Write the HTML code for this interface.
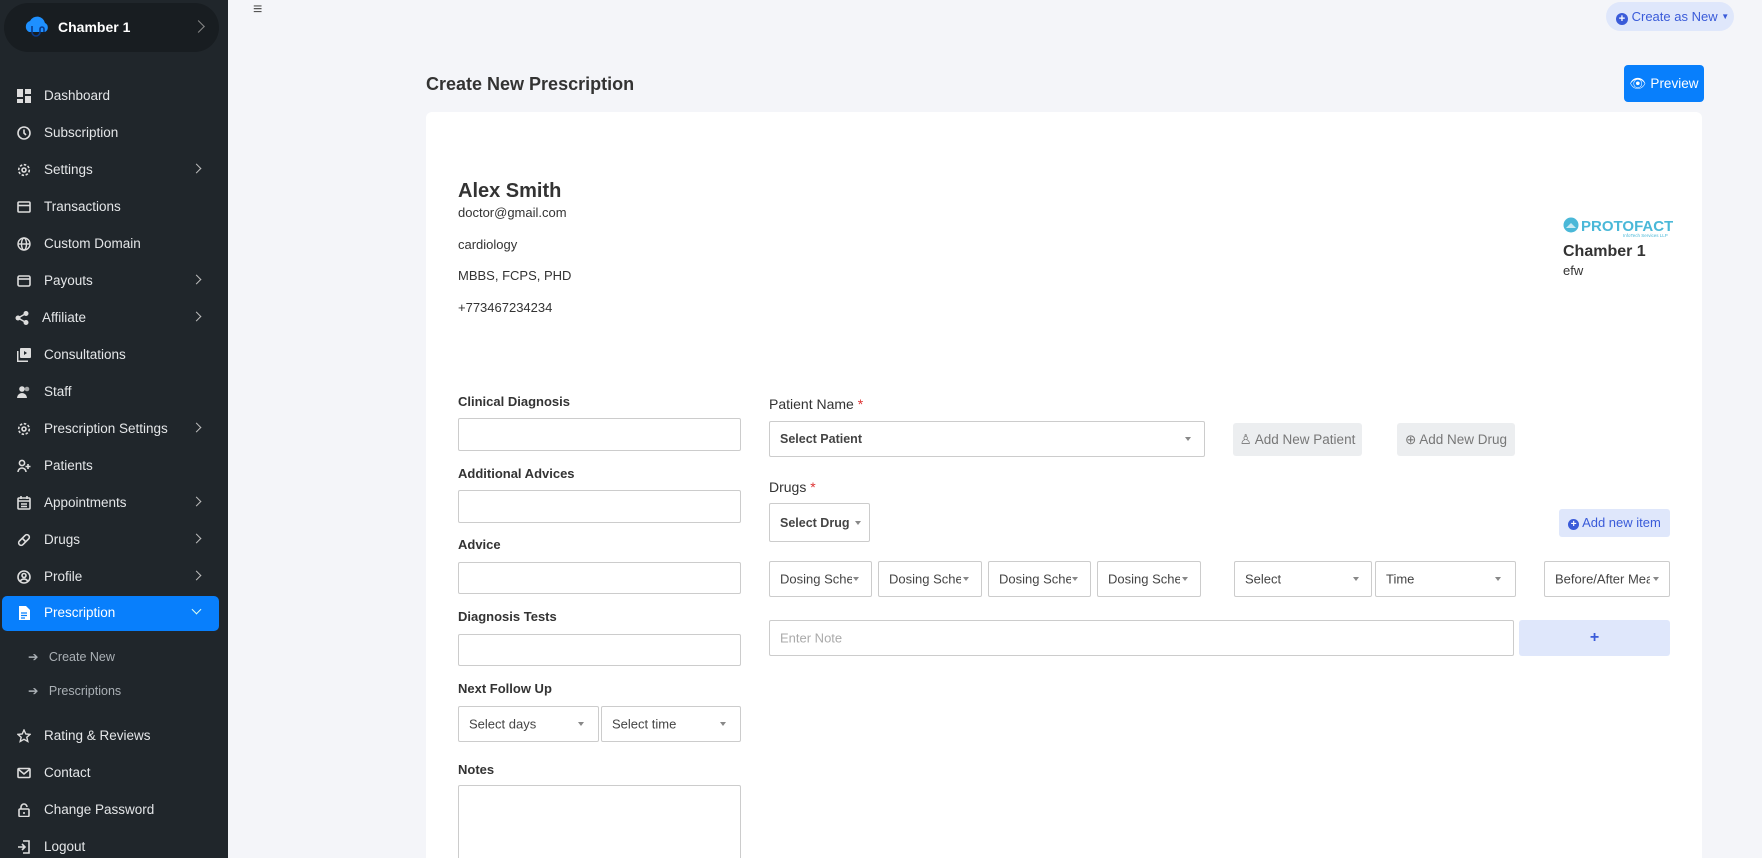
<!DOCTYPE html><html><head><meta charset="utf-8"><style>
*{box-sizing:border-box;margin:0;padding:0}
html{width:1762px;height:858px;overflow:hidden}
body{width:1762px;height:858px;overflow:hidden;background:#f4f5f9;font-family:"Liberation Sans",sans-serif;position:relative;color:#333}
.sb{position:absolute;left:0;top:0;width:228px;height:858px;background:#20262b}
.hd{position:absolute;left:4px;top:3px;width:215px;height:49px;border-radius:25px;background:#181d21;color:#fff;font-weight:bold;font-size:14px}
.mi{position:absolute;left:0;width:228px;height:34px;color:#e4e6e8;font-size:13.5px;line-height:34px}
.mi .ic{position:absolute;left:17px;top:10px;width:14px;height:14px}
.mi .t{position:absolute;left:44px}
.mi .ch{position:absolute;left:193px;top:12px;width:7px;height:7px;border-right:1.5px solid #bbb;border-top:1.5px solid #bbb;transform:rotate(45deg)}
.sub{position:absolute;color:#aab0b5;font-size:12.5px}
.a{position:absolute}
.card{position:absolute;left:426px;top:112px;width:1276px;height:746px;background:#fff;border-radius:6px 6px 0 0;overflow:hidden}
.lb{position:absolute;font-size:13px;font-weight:bold;color:#333}
.in{position:absolute;border:1px solid #ccc;border-radius:2px;background:#fff;font-size:13px;color:#444}
.in .v{position:absolute;left:10px;top:50%;transform:translateY(-50%);white-space:nowrap;overflow:hidden}
.car{position:absolute;top:50%;margin-top:-2px;width:0;height:0;border-left:3.5px solid transparent;border-right:3.5px solid transparent;border-top:4px solid #888}
.btn{position:absolute;border-radius:3px;font-size:13.5px;text-align:center}
</style></head><body>
<div class="sb">
 <div class="hd">
  <svg class="a" style="left:18px;top:11px" width="30" height="28" viewBox="0 0 30 28"><path d="M7 18a6 6 0 0 1 1-11 8 8 0 0 1 15 2 5 5 0 0 1 0 9z" fill="#1e90ff"/><path d="M10 12v6a4 4 0 0 0 8 0v-3a2 2 0 0 1 4 0v3" stroke="#0a3a8a" stroke-width="1.6" fill="none"/></svg>
  <span class="a" style="left:54px;top:16px">Chamber 1</span>
  <span class="a" style="left:190px;top:19px;width:9px;height:9px;border-right:1.3px solid #888;border-top:1.3px solid #888;transform:rotate(45deg)"></span>
 </div>
 <div class="mi" style="top:79px"><svg class="ic" viewBox="0 0 14 14" fill="#ddd"><rect x="0" y="0" width="6" height="8"/><rect x="8" y="0" width="6" height="5"/><rect x="0" y="10" width="6" height="4"/><rect x="8" y="7" width="6" height="7"/></svg><span class="t">Dashboard</span></div>
 <div class="mi" style="top:116px"><svg class="ic" viewBox="0 0 14 14" fill="none" stroke="#ddd" stroke-width="1.6"><circle cx="7" cy="7" r="6"/><path d="M7 3.5V7l2 2"/></svg><span class="t">Subscription</span></div>
 <div class="mi" style="top:153px"><svg class="ic" viewBox="0 0 14 14" fill="none" stroke="#ddd" stroke-width="1.6"><circle cx="7" cy="7" r="2"/><circle cx="7" cy="7" r="5.3" stroke-dasharray="2.5 1.6"/></svg><span class="t">Settings</span><span class="ch"></span></div>
 <div class="mi" style="top:190px"><svg class="ic" viewBox="0 0 14 14" fill="none" stroke="#ddd" stroke-width="1.6"><rect x="1" y="2" width="12" height="10" rx="1"/><path d="M1 5.5h12"/></svg><span class="t">Transactions</span></div>
 <div class="mi" style="top:227px"><svg class="ic" viewBox="0 0 14 14" fill="none" stroke="#ddd" stroke-width="1.4"><circle cx="7" cy="7" r="6"/><ellipse cx="7" cy="7" rx="2.5" ry="6"/><path d="M1 7h12"/></svg><span class="t">Custom Domain</span></div>
 <div class="mi" style="top:264px"><svg class="ic" viewBox="0 0 14 14" fill="none" stroke="#ddd" stroke-width="1.6"><rect x="1" y="2" width="12" height="10" rx="1.5"/><path d="M1 5h12"/></svg><span class="t">Payouts</span><span class="ch"></span></div>
 <div class="mi" style="top:301px"><svg class="ic" style="left:15px" viewBox="0 0 14 14" fill="#ddd"><circle cx="3" cy="7" r="2.5"/><circle cx="11" cy="2.5" r="2.5"/><circle cx="11" cy="11.5" r="2.5"/><path d="M3 7L11 2.5M3 7l8 4.5" stroke="#ddd" stroke-width="1.5"/></svg><span class="t" style="left:42px">Affiliate</span><span class="ch"></span></div>
 <div class="mi" style="top:338px"><svg class="ic" viewBox="0 0 14 14" fill="#ddd"><rect x="3" y="0" width="11" height="10" rx="1"/><path d="M0 3v11h11v-1.5H1.5V3z"/><path d="M7 3v4l3-2z" fill="#20262b"/></svg><span class="t">Consultations</span></div>
 <div class="mi" style="top:375px"><svg class="ic" viewBox="0 0 14 14" fill="#ddd"><circle cx="5" cy="4" r="2.8"/><path d="M0 13a5 5 0 0 1 10 0z"/><circle cx="10" cy="4" r="2.3" opacity=".7"/></svg><span class="t">Staff</span></div>
 <div class="mi" style="top:412px"><svg class="ic" viewBox="0 0 14 14" fill="none" stroke="#ddd" stroke-width="1.6"><circle cx="7" cy="7" r="2"/><circle cx="7" cy="7" r="5.3" stroke-dasharray="2.5 1.6"/></svg><span class="t">Prescription Settings</span><span class="ch"></span></div>
 <div class="mi" style="top:449px"><svg class="ic" viewBox="0 0 14 14" fill="none" stroke="#ddd" stroke-width="1.6"><circle cx="5" cy="4" r="2.6"/><path d="M1 13a4 4 0 0 1 8 0M11 5v5M8.5 7.5h5"/></svg><span class="t">Patients</span></div>
 <div class="mi" style="top:486px"><svg class="ic" viewBox="0 0 14 14" fill="none" stroke="#ddd" stroke-width="1.6"><rect x="1" y="2" width="12" height="11" rx="1"/><path d="M1 5h12M4 0v3M10 0v3M4 8h6M4 10.5h6"/></svg><span class="t">Appointments</span><span class="ch"></span></div>
 <div class="mi" style="top:523px"><svg class="ic" viewBox="0 0 14 14" fill="none" stroke="#ddd" stroke-width="1.6"><rect x="0.5" y="4.5" width="13" height="5" rx="2.5" transform="rotate(-45 7 7)"/><path d="M5 5l4 4"/></svg><span class="t">Drugs</span><span class="ch"></span></div>
 <div class="mi" style="top:560px"><svg class="ic" viewBox="0 0 14 14" fill="none" stroke="#ddd" stroke-width="1.6"><circle cx="7" cy="7" r="6"/><circle cx="7" cy="5.5" r="2"/><path d="M3 11.5a4.5 4.5 0 0 1 8 0"/></svg><span class="t">Profile</span><span class="ch"></span></div>
 <div class="mi" style="top:596px;left:2px;width:217px;height:35px;background:#087ffc;border-radius:5px;color:#fff"><svg class="ic" style="left:15px" viewBox="0 0 14 14" fill="#fff"><path d="M2 0h7l4 4v10H2z"/><path d="M4 7h6M4 9.5h6M4 12h4" stroke="#087ffc" stroke-width="1.2"/></svg><span class="t" style="left:42px">Prescription</span><span class="ch" style="left:191px;top:10px;transform:rotate(135deg);border-color:#dfe"></span></div>
 <div class="sub" style="left:28px;top:649px">➔ &nbsp;&nbsp;Create New</div>
 <div class="sub" style="left:28px;top:683px">➔ &nbsp;&nbsp;Prescriptions</div>
 <div class="mi" style="top:719px"><svg class="ic" viewBox="0 0 14 14" fill="none" stroke="#ddd" stroke-width="1.4"><path d="M7 1l1.8 4 4.2.4-3.2 2.8 1 4.3L7 10.3l-3.8 2.2 1-4.3L1 5.4l4.2-.4z"/></svg><span class="t">Rating &amp; Reviews</span></div>
 <div class="mi" style="top:756px"><svg class="ic" viewBox="0 0 14 14" fill="none" stroke="#ddd" stroke-width="1.6"><rect x="1" y="2.5" width="12" height="9" rx="1"/><path d="M1 3l6 5 6-5"/></svg><span class="t">Contact</span></div>
 <div class="mi" style="top:793px"><svg class="ic" viewBox="0 0 14 14" fill="none" stroke="#ddd" stroke-width="1.6"><rect x="2" y="6" width="10" height="7.5" rx="1"/><path d="M4 6V4a3 3 0 0 1 6 0"/><path d="M7 9v2"/></svg><span class="t">Change Password</span></div>
 <div class="mi" style="top:830px"><svg class="ic" viewBox="0 0 14 14" fill="none" stroke="#ddd" stroke-width="1.6"><path d="M6 1h6v12H6M1 7h7M5 4l3 3-3 3"/></svg><span class="t">Logout</span></div>
</div>

<div class="a" style="left:253px;top:1px;font-size:16px;color:#555">≡</div>
<div class="a" style="left:1606px;top:2px;width:128px;height:29px;border-radius:15px;background:#dfe7fb;color:#3a5bd9;font-size:13px;line-height:29px;padding-left:10px"><span style="display:inline-block;width:12px;height:12px;border-radius:50%;background:#3a5bd9;color:#fff;font-size:11px;line-height:12px;text-align:center;font-weight:bold;vertical-align:-1px">+</span> Create as New <span style="font-size:8px;vertical-align:2px">▼</span></div>
<div class="a" style="left:426px;top:74px;font-size:18px;color:#333;font-weight:600">Create New Prescription</div>
<div class="btn" style="left:1624px;top:65px;width:80px;height:37px;background:#087ffc;color:#fff;line-height:37px;border-radius:4px">👁 Preview</div>

<div class="card">
 <div class="a" style="left:32px;top:68px;font-size:20px;color:#333;font-weight:600">Alex Smith</div>
 <div class="a" style="left:32px;top:93px;font-size:13px">doctor@gmail.com</div>
 <div class="a" style="left:32px;top:125px;font-size:13px">cardiology</div>
 <div class="a" style="left:32px;top:156px;font-size:13px">MBBS, FCPS, PHD</div>
 <div class="a" style="left:32px;top:188px;font-size:13px">+773467234234</div>

 <svg class="a" style="left:1137px;top:105px" width="110" height="22" viewBox="0 0 110 22"><circle cx="8" cy="8" r="7.5" fill="#4ab8d8"/><path d="M3 11l5-5 5 5z" fill="#fff" opacity=".7"/><text x="18" y="14" font-family="Liberation Sans" font-weight="bold" font-size="15" fill="#4ab8d8">PROTOFACT</text><text x="60" y="20" font-family="Liberation Sans" font-size="4.5" fill="#4ab8d8">InfoTech Services LLP</text></svg>
 <div class="a" style="left:1137px;top:131px;font-size:16px;color:#333;font-weight:600">Chamber 1</div>
 <div class="a" style="left:1137px;top:151px;font-size:13px">efw</div>

 <div class="lb" style="left:32px;top:282px">Clinical Diagnosis</div>
 <div class="in" style="left:32px;top:306px;width:283px;height:33px"></div>
 <div class="lb" style="left:32px;top:354px">Additional Advices</div>
 <div class="in" style="left:32px;top:378px;width:283px;height:33px"></div>
 <div class="lb" style="left:32px;top:425px">Advice</div>
 <div class="in" style="left:32px;top:450px;width:283px;height:32px"></div>
 <div class="lb" style="left:32px;top:497px">Diagnosis Tests</div>
 <div class="in" style="left:32px;top:522px;width:283px;height:32px"></div>
 <div class="lb" style="left:32px;top:569px">Next Follow Up</div>
 <div class="in" style="left:32px;top:594px;width:141px;height:36px"><span class="v">Select days</span><span class="car" style="right:14px"></span></div>
 <div class="in" style="left:175px;top:594px;width:140px;height:36px"><span class="v">Select time</span><span class="car" style="right:14px"></span></div>
 <div class="lb" style="left:32px;top:650px">Notes</div>
 <div class="in" style="left:32px;top:673px;width:283px;height:100px"></div>

 <div class="a" style="left:343px;top:284px;font-size:14px;color:#333">Patient Name <span style="color:#d33">*</span></div>
 <div class="in" style="left:343px;top:309px;width:436px;height:36px"><span class="v" style="font-weight:bold;font-size:12.5px">Select Patient</span><span class="car" style="right:13px"></span></div>
 <div class="btn" style="left:807px;top:311px;width:129px;height:33px;background:#eceef0;color:#777;line-height:33px">♙ Add New Patient</div>
 <div class="btn" style="left:971px;top:311px;width:118px;height:33px;background:#eceef0;color:#777;line-height:33px">⊕ Add New Drug</div>

 <div class="a" style="left:343px;top:367px;font-size:14px;color:#333">Drugs <span style="color:#d33">*</span></div>
 <div class="in" style="left:343px;top:391px;width:101px;height:39px"><span class="v" style="font-weight:bold;font-size:12.5px">Select Drug</span><span class="car" style="right:8px"></span></div>
 <div class="btn" style="left:1133px;top:397px;width:111px;height:28px;background:#dfe7fb;color:#3a5bd9;line-height:28px;font-size:13px"><span style="display:inline-block;width:11px;height:11px;border-radius:50%;background:#3a5bd9;color:#fff;font-size:10px;line-height:11px;font-weight:bold">+</span> Add new item</div>

 <div class="in" style="left:343px;top:449px;width:103px;height:36px"><span class="v" style="width:72px">Dosing Schedule</span><span class="car" style="right:12px"></span></div>
 <div class="in" style="left:452px;top:449px;width:104px;height:36px"><span class="v" style="width:72px">Dosing Schedule</span><span class="car" style="right:12px"></span></div>
 <div class="in" style="left:562px;top:449px;width:103px;height:36px"><span class="v" style="width:72px">Dosing Schedule</span><span class="car" style="right:12px"></span></div>
 <div class="in" style="left:671px;top:449px;width:104px;height:36px"><span class="v" style="width:72px">Dosing Schedule</span><span class="car" style="right:12px"></span></div>
 <div class="in" style="left:808px;top:449px;width:138px;height:36px"><span class="v">Select</span><span class="car" style="right:12px"></span></div>
 <div class="in" style="left:949px;top:449px;width:141px;height:36px"><span class="v">Time</span><span class="car" style="right:14px"></span></div>
 <div class="in" style="left:1118px;top:449px;width:126px;height:36px"><span class="v" style="width:95px">Before/After Meal</span><span class="car" style="right:10px"></span></div>

 <div class="in" style="left:343px;top:508px;width:745px;height:36px"><span class="v" style="color:#aaa">Enter Note</span></div>
 <div class="btn" style="left:1093px;top:508px;width:151px;height:36px;background:#dfe7fb;color:#3a5bd9;line-height:36px;font-weight:bold;font-size:16px">+</div>
</div>
</body></html>
